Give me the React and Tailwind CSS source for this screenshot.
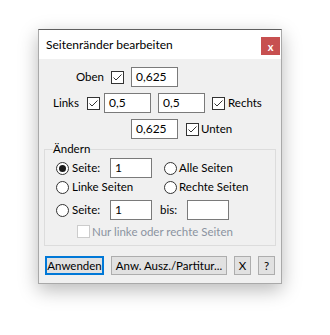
// Seitenränder bearbeiten — Windows-style dialog
import React from 'react';

const FONT = { fontFamily: 'Lato, "Noto Sans", "Liberation Sans", sans-serif' };

function Check({ checked = true, disabled = false }) {
  return (
    <span className={`w-[13px] h-[13px] shrink-0 border bg-white flex items-center justify-center ${disabled ? 'border-[#cccccc]' : 'border-[#333333]'}`}>
      {checked && (
        <svg width="11" height="11" viewBox="0 0 11 11">
          <polyline points="1.5,5.5 4,8 9.5,2.5" fill="none" stroke="#333333" strokeWidth="1" />
        </svg>
      )}
    </span>
  );
}

function Radio({ checked = false }) {
  return (
    <span className="w-[13px] h-[13px] shrink-0 rounded-full border border-[#333333] bg-white flex items-center justify-center">
      {checked && <span className="w-[7px] h-[7px] rounded-full bg-[#1a1a1a]" />}
    </span>
  );
}

function Field({ value, w = 'w-[47px]', h = 'h-[20px]' }) {
  return (
    <div className={`${w} ${h} shrink-0 border border-[#7a7a7a] bg-white flex items-center pl-[4px] text-[12px] text-black`}>
      {value}
    </div>
  );
}

export default function App() {
  return (
    <div className="w-[330px] h-[335px] bg-white pl-[38px] pt-[29px]" style={FONT}>
      <div className="w-[244px] h-[255px] flex flex-col border border-[#a9a9a9] border-t-[#5f5f5f] bg-[#f0f0f0] shadow-[0_6px_18px_rgba(0,0,0,0.28)]">
        {/* title bar */}
        <div className="h-[29px] shrink-0 bg-white flex items-center pl-[7px] pr-[1px]">
          <span className="flex-1 text-[12px] text-black">Seitenränder bearbeiten</span>
          <div className="w-[19px] h-[18px] mt-[3px] bg-[#c75050] flex items-center justify-center text-white text-[11px] font-bold leading-none">x</div>
        </div>

        {/* margins */}
        <div className="pt-[8px] text-[11.5px] text-black">
          <div className="flex items-center h-[20px]">
            <span className="w-[65px] text-right">Oben</span>
            <span className="ml-[7px]"><Check /></span>
            <span className="ml-[7px]"><Field value="0,625" /></span>
          </div>
          <div className="flex items-center h-[20px] mt-[6px]">
            <span className="w-[48px] pl-[14px]">Links</span>
            <Check />
            <span className="ml-[4px]"><Field value="0,5" /></span>
            <span className="ml-[7px]"><Field value="0,5" /></span>
            <span className="ml-[7px]"><Check /></span>
            <span className="ml-[3px]">Rechts</span>
          </div>
          <div className="flex items-center h-[20px] mt-[6px]">
            <span className="ml-[92px]"><Field value="0,625" /></span>
            <span className="ml-[8px]"><Check /></span>
            <span className="ml-[2px]">Unten</span>
          </div>
        </div>

        {/* Ändern group */}
        <fieldset className="ml-[5px] mt-[2px] w-[232px] border border-[#dcdcdc] text-[11.5px] text-black">
          <legend className="ml-[8px] h-[16px] leading-[16px]">Ändern</legend>
          <div className="flex items-center h-[20px] mt-[1px]">
            <div className="ml-[11px] w-[54px] flex items-center">
              <Radio checked />
              <span className="ml-[3px]">Seite:</span>
            </div>
            <Field value="1" w="w-[42px]" />
            <div className="ml-[12px] flex items-center">
              <Radio />
              <span className="ml-[2px]">Alle Seiten</span>
            </div>
          </div>
          <div className="flex items-center h-[16px] mt-[1px]">
            <div className="ml-[11px] w-[108px] flex items-center">
              <Radio />
              <span className="ml-[3px]">Linke Seiten</span>
            </div>
            <div className="flex items-center">
              <Radio />
              <span className="ml-[2px]">Rechte Seiten</span>
            </div>
          </div>
          <div className="flex items-center h-[20px] mt-[5px]">
            <div className="ml-[11px] w-[54px] flex items-center">
              <Radio />
              <span className="ml-[3px]">Seite:</span>
            </div>
            <Field value="1" w="w-[42px]" />
            <span className="ml-[8px] w-[27px]">bis:</span>
            <Field value="" w="w-[42px]" />
          </div>
          <div className="flex items-center h-[13px] mt-[5px] mb-[7px]">
            <span className="ml-[32px]"><Check checked={false} disabled /></span>
            <span className="ml-[2px] text-[#8b93a0]">Nur linke oder rechte Seiten</span>
          </div>
        </fieldset>

        {/* buttons */}
        <div className="flex items-center mt-[10px] text-[11.5px] text-black whitespace-nowrap">
          <button className="ml-[6px] w-[59px] h-[19px] border-2 border-[#0078d7] bg-[#e1e1e1] leading-none">Anwenden</button>
          <button className="ml-[7px] w-[116px] h-[19px] border border-[#adadad] bg-[#e1e1e1] leading-none">Anw. Ausz./Partitur...</button>
          <button className="ml-[7px] w-[17px] h-[19px] border border-[#adadad] bg-[#e1e1e1] leading-none">X</button>
          <button className="ml-[7px] w-[17px] h-[19px] border border-[#adadad] bg-[#e1e1e1] leading-none">?</button>
        </div>
      </div>
    </div>
  );
}
